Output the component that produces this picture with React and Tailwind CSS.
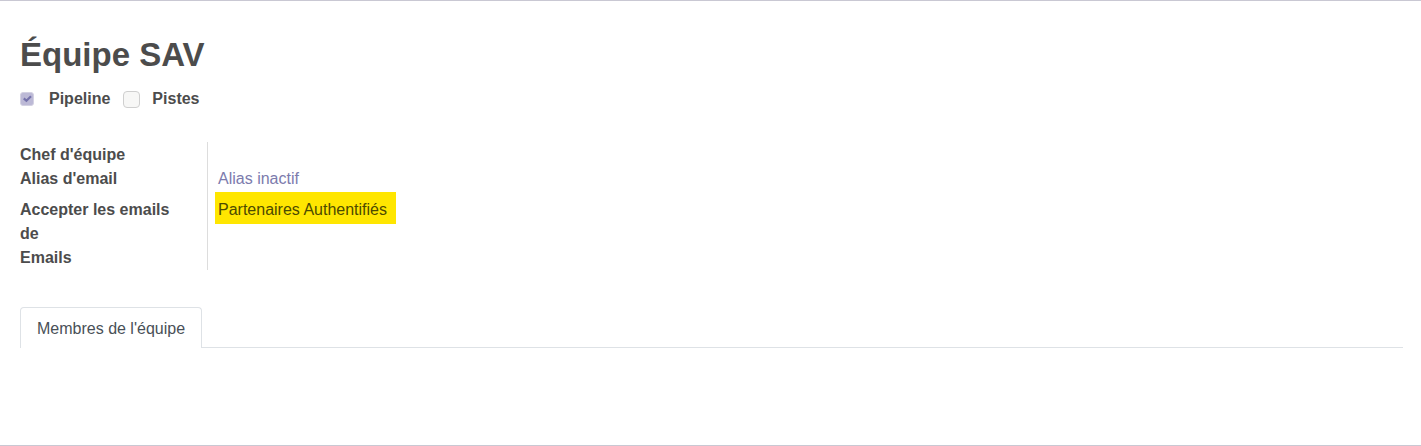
function Option({ id, label, checked }) {
  return (
    <div className="flex items-center">
      {checked ? (
        <span className="relative flex">
          <input
            id={id}
            type="checkbox"
            checked
            disabled
            readOnly
            className="size-[14px] appearance-none rounded-[3px] border border-[#d3d1e2] bg-[#bcb9d6]"
          />
          <svg
            viewBox="0 0 14 14"
            className="pointer-events-none absolute inset-0 size-[14px]"
            fill="none"
            stroke="#7572ab"
            strokeWidth="2.2"
            aria-hidden="true"
          >
            <path d="M3.8 6.4 6.4 8.8 11 4.2" />
          </svg>
        </span>
      ) : (
        <input
          id={id}
          type="checkbox"
          disabled
          className="size-[17px] appearance-none rounded-[4px] border border-[#cfcfcf] bg-[#f7f7f6]"
        />
      )}
      <label htmlFor={id} className={checked ? "pl-[15px] font-bold" : "pl-3 font-bold"}>
        {label}
      </label>
    </div>
  );
}

function Field({ label, children, className = "" }) {
  return (
    <div className={`flex ${className}`}>
      <dt className="w-[187px] shrink-0 pr-6 font-bold">{label}</dt>
      <dd className="pl-[11px]">{children}</dd>
    </div>
  );
}

export default function App() {
  return (
    <main className="border-y border-[#c9c8d3] bg-white pt-[34px] pr-[18px] pb-[97px] pl-5 font-['Liberation_Sans',Arial,sans-serif] text-base leading-6 text-[#4c4c4c]">
      <h1 className="text-[33px] leading-10 font-bold">Équipe SAV</h1>

      <div className="mt-3 flex gap-[13px]">
        <Option id="pipeline" label="Pipeline" checked />
        <Option id="pistes" label="Pistes" />
      </div>

      <div className="mt-[31px] flex">
        <dl className="relative pt-px before:absolute before:inset-y-0 before:left-[187px] before:border-l before:border-[#dddddd]">
          <Field label="Chef d'équipe" />
          <Field label="Alias d'email">
            <a href="#alias" className="text-[#7c7bad]">
              Alias inactif
            </a>
          </Field>
          <Field label="Accepter les emails de" className="pt-[7px]">
            <span className="-mx-[3px] bg-[#ffe600] pt-[9px] pr-[9px] pb-[6px] pl-[3px] text-[#4c4a00]">
              Partenaires Authentifiés
            </span>
          </Field>
          <Field label="Emails" />
        </dl>
      </div>

      <div role="tablist" className="mt-[37px] flex border-b border-[#dee2e6]">
        <button
          type="button"
          role="tab"
          aria-selected="true"
          className="-mb-px rounded-t border border-b-0 border-[#dee2e6] bg-white px-4 pt-[9px] pb-[7px] text-[#495057]"
        >
          Membres de l'équipe
        </button>
      </div>
    </main>
  );
}
